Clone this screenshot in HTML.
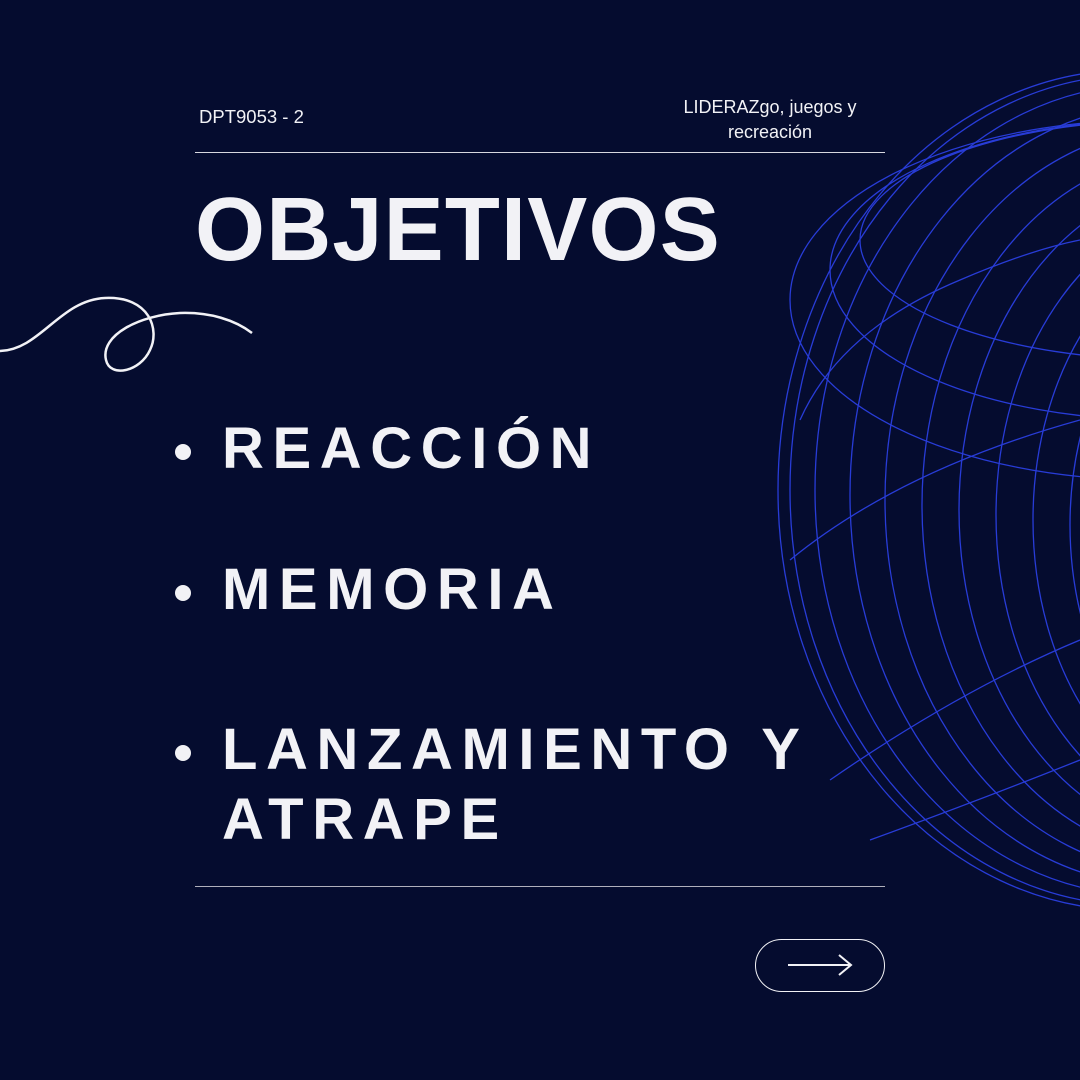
<!DOCTYPE html>
<html><head><meta charset="utf-8"><style>
body{margin:0;width:1080px;height:1080px;background:#050c2f;overflow:hidden;position:relative;font-family:"Liberation Sans",sans-serif;color:#f2f2f6}
.a{position:absolute}
.li{position:absolute;left:222px;font-weight:bold;font-size:58px;letter-spacing:8.6px;line-height:70px}
.dot{position:absolute;left:175px;width:16px;height:16px;border-radius:50%;background:#f2f2f6}
</style></head><body>
<svg class="a" style="left:0;top:0" width="1080" height="1080">
<g fill="none" stroke="#2a3fe0" stroke-width="1.3" opacity="0.95">
<ellipse cx="1130" cy="490" rx="352" ry="420"/>
<ellipse cx="1135" cy="490" rx="345" ry="415"/>
<ellipse cx="1145" cy="490" rx="330" ry="405"/>
<ellipse cx="1160" cy="495" rx="310" ry="390"/>
<ellipse cx="1175" cy="500" rx="290" ry="372"/>
<ellipse cx="1190" cy="505" rx="268" ry="352"/>
<ellipse cx="1205" cy="510" rx="246" ry="330"/>
<ellipse cx="1220" cy="515" rx="224" ry="308"/>
<ellipse cx="1235" cy="520" rx="202" ry="286"/>
<ellipse cx="1250" cy="525" rx="180" ry="264"/>
<ellipse cx="1265" cy="530" rx="158" ry="242"/>
<ellipse cx="1280" cy="535" rx="136" ry="220"/>
<ellipse cx="1150" cy="300" rx="360" ry="180"/>
<ellipse cx="1160" cy="270" rx="330" ry="150"/>
<ellipse cx="1170" cy="240" rx="310" ry="120"/>
<path d="M790 560 Q900 470 1080 420"/>
<path d="M830 780 Q960 690 1080 640"/>
<path d="M870 840 Q980 800 1080 760"/>
<path d="M800 420 Q840 330 960 280 Q1030 250 1080 240"/>
</g></svg>
<div class="a" style="left:199px;top:106px;font-size:18.5px">DPT9053 - 2</div>
<div class="a" style="left:655px;top:95px;width:230px;text-align:center;font-size:18px;line-height:25px">LIDERAZgo, juegos y<br>recreación</div>
<div class="a" style="left:195px;top:152px;width:690px;height:1px;background:#d8d8e0"></div>
<div class="a" style="left:195px;top:886px;width:690px;height:1px;background:#b0b0bc"></div>
<div class="a" style="left:195px;top:180px;font-size:90px;font-weight:bold;line-height:100px;letter-spacing:1.2px">OBJETIVOS</div>
<svg class="a" style="left:0;top:0" width="300" height="400"><path d="M0,351 C40,350 60,300 105,298 C150,296 160,330 150,350 C140,372 110,378 106,360 C100,335 140,315 180,313 C210,312 235,320 252,333" fill="none" stroke="#f2f2f6" stroke-width="2.5"/></svg>
<div class="dot" style="top:444px"></div><div class="li" style="top:414px">REACCIÓN</div>
<div class="dot" style="top:585px"></div><div class="li" style="top:555px">MEMORIA</div>
<div class="dot" style="top:745px"></div><div class="li" style="top:715px">LANZAMIENTO Y<br>ATRAPE</div>
<div class="a" style="left:755px;top:939px;width:128px;height:51px;border:1.5px solid #f2f2f6;border-radius:27px"></div>
<svg class="a" style="left:785px;top:950px" width="70" height="30"><path d="M3 15H65M54 5L66 15L54 25" fill="none" stroke="#f2f2f6" stroke-width="2"/></svg>
</body></html>
